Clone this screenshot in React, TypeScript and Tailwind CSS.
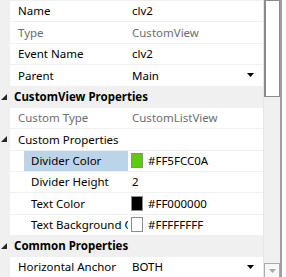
import React from "react";

const font = { fontFamily: '"Noto Sans", "Liberation Sans", sans-serif' };

function Caret() {
  return (
    <svg width="7" height="4" viewBox="0 0 7 4" className="shrink-0">
      <polygon points="0,0 7,0 3.5,4" fill="#000" />
    </svg>
  );
}

function Expander() {
  return (
    <svg width="6" height="6" viewBox="0 0 6 6" className="shrink-0">
      <polygon points="6,0 6,6 0,6" fill="#262626" />
    </svg>
  );
}

type RowProps = {
  label: string;
  value?: React.ReactNode;
  gray?: boolean;
  nested?: boolean;
  selected?: boolean;
  caret?: boolean;
};

function Row({ label, value, gray, nested, selected, caret }: RowProps) {
  const txt = gray ? "text-[#6d6d6d]" : "text-black";
  return (
    <div className="flex h-[21px] items-stretch">
      <div className="w-[10px] shrink-0" />
      <div className="flex w-[118px] shrink-0 bg-white">
        {nested && <div className="w-[14px] shrink-0" />}
        <div
          className={`flex min-w-0 flex-1 items-center overflow-hidden whitespace-nowrap ${
            nested ? "pl-[7px]" : "pl-[8px]"
          } ${selected ? "bg-[#bcd4ea]" : ""} ${txt}`}
        >
          {label}
        </div>
      </div>
      <div className={`flex flex-1 items-center bg-white pl-[4px] pr-[9px] whitespace-nowrap ${txt}`}>
        <div className="flex-1">{value}</div>
        {caret && <Caret />}
      </div>
    </div>
  );
}

function Header({ label, short }: { label: string; short?: boolean }) {
  return (
    <div className={`flex ${short ? "h-[20px]" : "h-[21px]"} items-center bg-[#f0f0f0]`}>
      <div className="flex w-[14px] shrink-0 items-center pl-[1px]">
        <Expander />
      </div>
      <div className="font-bold text-black whitespace-nowrap">{label}</div>
    </div>
  );
}

function GroupRow({ label }: { label: string }) {
  return (
    <div className="flex h-[21px] items-stretch">
      <div className="flex w-[10px] shrink-0 items-center pl-[1px]">
        <Expander />
      </div>
      <div className="flex flex-1 items-center bg-white pl-[8px] text-black whitespace-nowrap">
        {label}
      </div>
    </div>
  );
}

function Swatch({ color, text }: { color: string; text: string }) {
  return (
    <div className="flex items-center gap-[5px]">
      <div
        className="ml-[-1px] h-[15px] w-[12px] border border-[#8c8c8c]"
        style={{ backgroundColor: color }}
      />
      <span>{text}</span>
    </div>
  );
}

export default function App() {
  return (
    <div
      className="flex h-[277px] w-[286px] overflow-hidden bg-white text-[11.5px] leading-none"
      style={font}
    >
      <div className="flex w-[263px] shrink-0 flex-col gap-[1px] bg-[#f0f0f0] pt-[1px]">
        <Row label="Name" value="clv2" />
        <Row label="Type" value="CustomView" gray />
        <Row label="Event Name" value="clv2" />
        <Row label="Parent" value="Main" caret />
        <Header label="CustomView Properties" />
        <Row label="Custom Type" value="CustomListView" gray />
        <GroupRow label="Custom Properties" />
        <Row label="Divider Color" nested selected value={<Swatch color="#5fcc0a" text="#FF5FCC0A" />} />
        <Row label="Divider Height" nested value="2" />
        <Row label="Text Color" nested value={<Swatch color="#000000" text="#FF000000" />} />
        <Row label="Text Background Color" nested value={<Swatch color="#ffffff" text="#FFFFFFFF" />} />
        <Header label="Common Properties" short />
        <Row label="Horizontal Anchor" value="BOTH" caret />
      </div>
      <div className="flex w-[23px] shrink-0">
        <div className="flex w-[17px] flex-col justify-between border-l border-[#e6e6e6] bg-[#f0f0f0]">
          <div className="h-[97px] border-y border-r border-l-2 border-[#8a8a8a] bg-white" />
          <div className="flex h-[14px] items-center justify-center border-x border-t border-[#ababab] bg-[#f7f7f7]">
            <svg width="7" height="4" viewBox="0 0 7 4">
              <polygon points="0,0 7,0 3.5,4" fill="#a8a8a8" />
            </svg>
          </div>
        </div>
        <div className="w-[2px] bg-[#a0a0a0]" />
        <div className="flex-1 bg-white" />
      </div>
    </div>
  );
}
